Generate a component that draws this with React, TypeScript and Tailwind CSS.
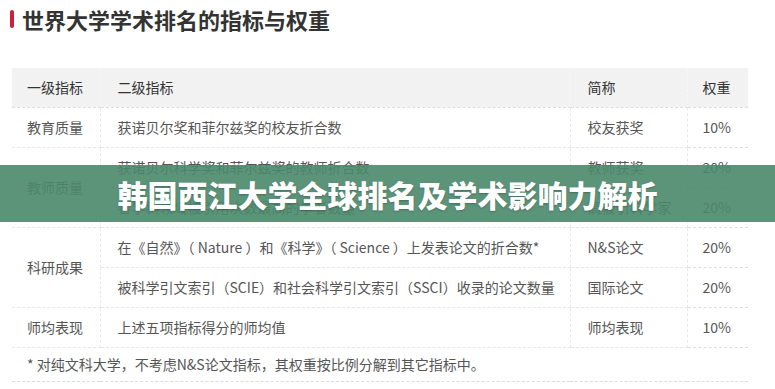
import React from 'react';

type Row = {
    level1?: string;
    span?: number;
    desc: string;
    short: string;
    weight: string;
};

const rows: Row[] = [
    { level1: '教育质量', span: 1, desc: '获诺贝尔奖和菲尔兹奖的校友折合数', short: '校友获奖', weight: '10%' },
    { level1: '教师质量', span: 2, desc: '获诺贝尔科学奖和菲尔兹奖的教师折合数', short: '教师获奖', weight: '20%' },
    { desc: '各学科领域被引用次数最高的学者数量', short: '高被引科学家', weight: '20%' },
    { level1: '科研成果', span: 2, desc: '在《自然》（ Nature ）和《科学》（ Science ）上发表论文的折合数*', short: 'N&S论文', weight: '20%' },
    { desc: '被科学引文索引（SCIE）和社会科学引文索引（SSCI）收录的论文数量', short: '国际论文', weight: '20%' },
    { level1: '师均表现', span: 1, desc: '上述五项指标得分的师均值', short: '师均表现', weight: '10%' },
];

export default function App() {
    const cell = 'h-[40px] border-b border-dashed border-[#dedede] align-middle';
    const vline = 'border-r border-dashed border-[#e8e8e8]';
    const head = 'h-[39px] text-left font-normal border-b border-r border-dashed border-[#f7f7f7] border-b-[#dedede]';

    return (
        <div
            className="relative w-[775px] h-[389px] overflow-hidden bg-white"
            style={{ fontFamily: '"Noto Sans CJK SC", "Noto Sans", sans-serif' }}
        >
            <div className="flex items-center h-[38px] pl-[10px]">
                <span className="w-[4px] h-[18px] rounded-sm bg-[#c8213a]" />
                <h1 className="ml-[8px] text-[22px] leading-none font-bold text-[#333]">
                    世界大学学术排名的指标与权重
                </h1>
            </div>

            <table className="mt-[30px] ml-[12px] w-[736px] border-collapse text-[14px] text-[#555] table-fixed">
                <colgroup>
                    <col className="w-[88px]" />
                    <col className="w-[470px]" />
                    <col className="w-[117px]" />
                    <col className="w-[61px]" />
                </colgroup>
                <thead>
                    <tr className="bg-[#f2f2f2] text-[#333]">
                        <th className={`${head} pl-[15px]`}>一级指标</th>
                        <th className={`${head} pl-[17px]`}>二级指标</th>
                        <th className={`${head} pl-[17px]`}>简称</th>
                        <th className="h-[39px] pl-[15px] text-left font-normal border-b border-dashed border-[#dedede]">权重</th>
                    </tr>
                </thead>
                <tbody>
                    {rows.map((r, i) => (
                        <tr key={i}>
                            {r.level1 && (
                                <td rowSpan={r.span} className={`${cell} ${vline} pl-[15px]`}>{r.level1}</td>
                            )}
                            <td className={`${cell} ${vline} pl-[17px] whitespace-nowrap`}>{r.desc}</td>
                            <td className={`${cell} ${vline} pl-[17px]`}>{r.short}</td>
                            <td className={`${cell} pl-[15px]`}>{r.weight}</td>
                        </tr>
                    ))}
                    <tr>
                        <td colSpan={4} className="h-[34px] pl-[15px] border-b border-dashed border-[#dedede] text-[#555]">
                            * 对纯文科大学，不考虑N&amp;S论文指标，其权重按比例分解到其它指标中。
                        </td>
                    </tr>
                </tbody>
            </table>

            <div className="absolute left-0 top-[165px] w-full h-[57px] bg-[rgba(74,136,108,0.9)] flex items-center justify-center">
                <span className="text-white text-[30px] font-black leading-none [text-shadow:0_1px_2px_rgba(0,0,0,0.25)]">
                    韩国西江大学全球排名及学术影响力解析
                </span>
            </div>
        </div>
    );
}
